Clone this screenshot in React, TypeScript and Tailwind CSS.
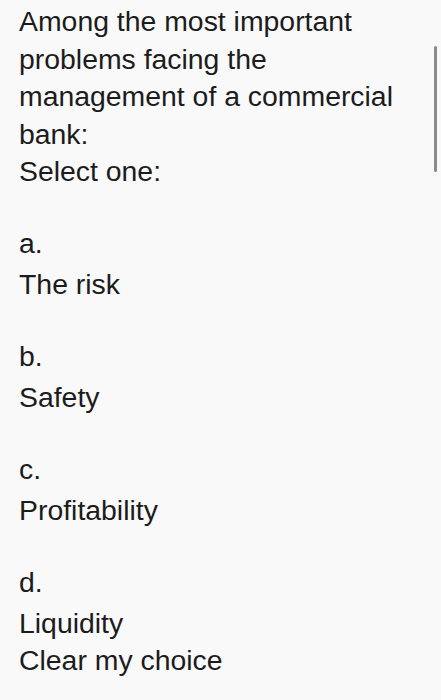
export default function App() {
  const options = [
    { label: 'a.', text: 'The risk' },
    { label: 'b.', text: 'Safety' },
    { label: 'c.', text: 'Profitability' },
    { label: 'd.', text: 'Liquidity' },
  ];

  return (
    <div className="relative min-h-[700px] bg-[#f9f9f9] px-[19px] pt-[3px] text-[28.4px] leading-[37.5px] text-[#1c1c1c] font-['Liberation_Sans',Arial,sans-serif]">
      {/* scrollbar indicator */}
      <div className="absolute right-[4px] top-[46px] h-[126px] w-[3px] rounded-full bg-[#8c8c8c]" />

      <p className="pr-6">Among the most important problems facing the management of a commercial bank:</p>
      <p>Select one:</p>

      <div>
        {options.map((o) => (
          <div key={o.label} className="mt-[34px]">
            <div>{o.label}</div>
            <div className="mt-[4px]">{o.text}</div>
          </div>
        ))}
        <div className="-mt-[1px]">Clear my choice</div>
      </div>
    </div>
  );
}
